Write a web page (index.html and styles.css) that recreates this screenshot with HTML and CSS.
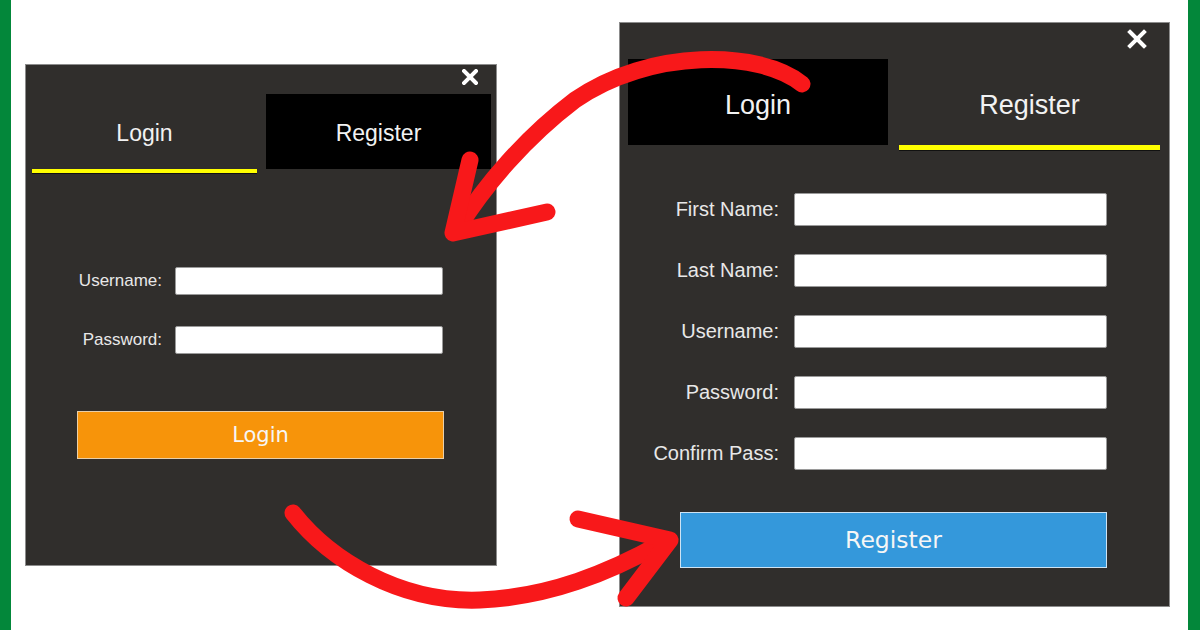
FILE: index.html
```html
<!DOCTYPE html>
<html lang="en">
<head>
    <meta charset="UTF-8">
    <meta name="viewport" content="width=device-width, initial-scale=1.0">
    <title>Login and Register Forms</title>
    <link rel="stylesheet" href="styles.css">
</head>
<body>

<div class="page">
    <!-- Login form -->
    <div class="panel panel-login">
        <div class="panel-top">
            <svg class="close" width="16" height="16" viewBox="0 0 16 16"><path d="M2 2L14 14M14 2L2 14" /></svg>
        </div>
        <div class="tabs">
            <div class="tab active">Login</div>
            <div class="tab dark">Register</div>
        </div>
        <form class="form">
            <div class="row"><label>Username:</label><input type="text"></div>
            <div class="row"><label>Password:</label><input type="password"></div>
            <button type="button" class="btn btn-orange">Login</button>
        </form>
    </div>

    <!-- Register form -->
    <div class="panel panel-register">
        <div class="panel-top">
            <svg class="close" width="20" height="20" viewBox="0 0 20 20"><path d="M3 3L17 17M17 3L3 17" /></svg>
        </div>
        <div class="tabs">
            <div class="tab dark">Login</div>
            <div class="tab active">Register</div>
        </div>
        <form class="form">
            <div class="row"><label>First Name:</label><input type="text"></div>
            <div class="row"><label>Last Name:</label><input type="text"></div>
            <div class="row"><label>Username:</label><input type="text"></div>
            <div class="row"><label>Password:</label><input type="password"></div>
            <div class="row"><label>Confirm Pass:</label><input type="password"></div>
            <button type="button" class="btn btn-blue">Register</button>
        </form>
    </div>
</div>

<!-- red arrows drawn over both panels -->
<svg class="arrows" width="1200" height="630" viewBox="0 0 1200 630">
    <path d="M802 84 C 760 50, 650 48, 575 100 C 525 138, 485 185, 458 228" />
    <path d="M470 160 L 453 233 L 547 212" />
    <path d="M293 513 C 330 560, 400 603, 480 600 C 550 597, 610 572, 662 543" />
    <path d="M578 519 L 670 540 L 626 598" />
</svg>

</body>
</html>
```

FILE: styles.css
```css
body {
    margin: 0;
    width: 1200px;
    height: 630px;
    box-sizing: border-box;
    border-left: 11px solid #03873a;
    border-right: 12px solid #03873a;
    background: #fff;
    font-family: "Liberation Sans", Arial, sans-serif;
    position: relative;
    overflow: hidden;
}
.page {
    display: flex;
    align-items: flex-start;
    gap: 122px;
    padding-left: 14px;
}
.panel {
    box-sizing: border-box;
    background-color: #302e2c;
    border: 1px solid #8c8c8c;
}
.panel-login {
    width: 472px;
    height: 502px;
    margin-top: 64px;
}
.panel-register {
    width: 551px;
    height: 585px;
    margin-top: 22px;
}
.panel-top {
    display: flex;
    justify-content: flex-end;
    align-items: flex-start;
}
.panel-login .panel-top {
    height: 29px;
    padding: 4px 18px 0 0;
    box-sizing: border-box;
}
.panel-register .panel-top {
    height: 36px;
    padding: 6px 22px 0 0;
    box-sizing: border-box;
}
.close path {
    stroke: #fff;
    stroke-width: 4;
    stroke-linecap: square;
    fill: none;
}
.tabs {
    display: flex;
    align-items: flex-start;
}
.tab {
    color: #f2f2f2;
    text-align: center;
    box-sizing: border-box;
}
.tab.dark {
    background-color: #000;
}
.tab.active {
    border-bottom: 4px solid #ffff00;
    box-shadow: 0 1px 0 #111;
}
.panel-login .tabs {
    gap: 9px;
    padding-left: 6px;
}
.panel-login .tab {
    width: 225px;
    height: 75px;
    line-height: 78px;
    font-size: 23px;
}
.panel-login .tab.active {
    height: 79px;
}
.panel-register .tabs {
    gap: 11px;
    padding-left: 8px;
}
.panel-register .tab {
    width: 260px;
    height: 86px;
    line-height: 92px;
    font-size: 27px;
}
.panel-register .tab.active {
    width: 261px;
    height: 91px;
    border-bottom-width: 5px;
}
.form {
    display: flex;
    flex-direction: column;
    align-items: flex-end;
    margin: 0;
}
.row {
    display: flex;
    align-items: center;
}
.row label {
    color: #e8e8e8;
    white-space: nowrap;
}
.row input {
    box-sizing: border-box;
    background: #fff;
    border: 1px solid #9a9a9a;
    border-radius: 2px;
    margin: 0;
}
.panel-login .form {
    padding: 94px 53px 0 0;
    gap: 31px;
}
.panel-login .row {
    gap: 13px;
}
.panel-login .row label {
    font-size: 17px;
}
.panel-login .row input {
    width: 268px;
    height: 28px;
}
.panel-register .form {
    padding: 43px 62px 0 0;
    gap: 28px;
}
.panel-register .row {
    gap: 15px;
}
.panel-register .row label {
    font-size: 20px;
}
.panel-register .row input {
    width: 313px;
    height: 33px;
}
.btn {
    box-sizing: border-box;
    font-family: "DejaVu Sans", Verdana, sans-serif;
    color: #f6f6f6;
    cursor: pointer;
}
.btn-orange {
    width: 367px;
    height: 48px;
    margin-top: 26px;
    margin-right: -1px;
    background-color: #f7940a;
    border: 1px solid #e9cfa9;
    font-size: 21px;
}
.btn-blue {
    width: 427px;
    height: 56px;
    margin-top: 14px;
    background-color: #3498db;
    border: 1px solid #cde3f4;
    font-size: 23.5px;
}
.arrows {
    position: absolute;
    left: -11px;
    top: 0;
    pointer-events: none;
}
.arrows path {
    fill: none;
    stroke: #f8181a;
    stroke-width: 17;
    stroke-linecap: round;
    stroke-linejoin: round;
}
```
